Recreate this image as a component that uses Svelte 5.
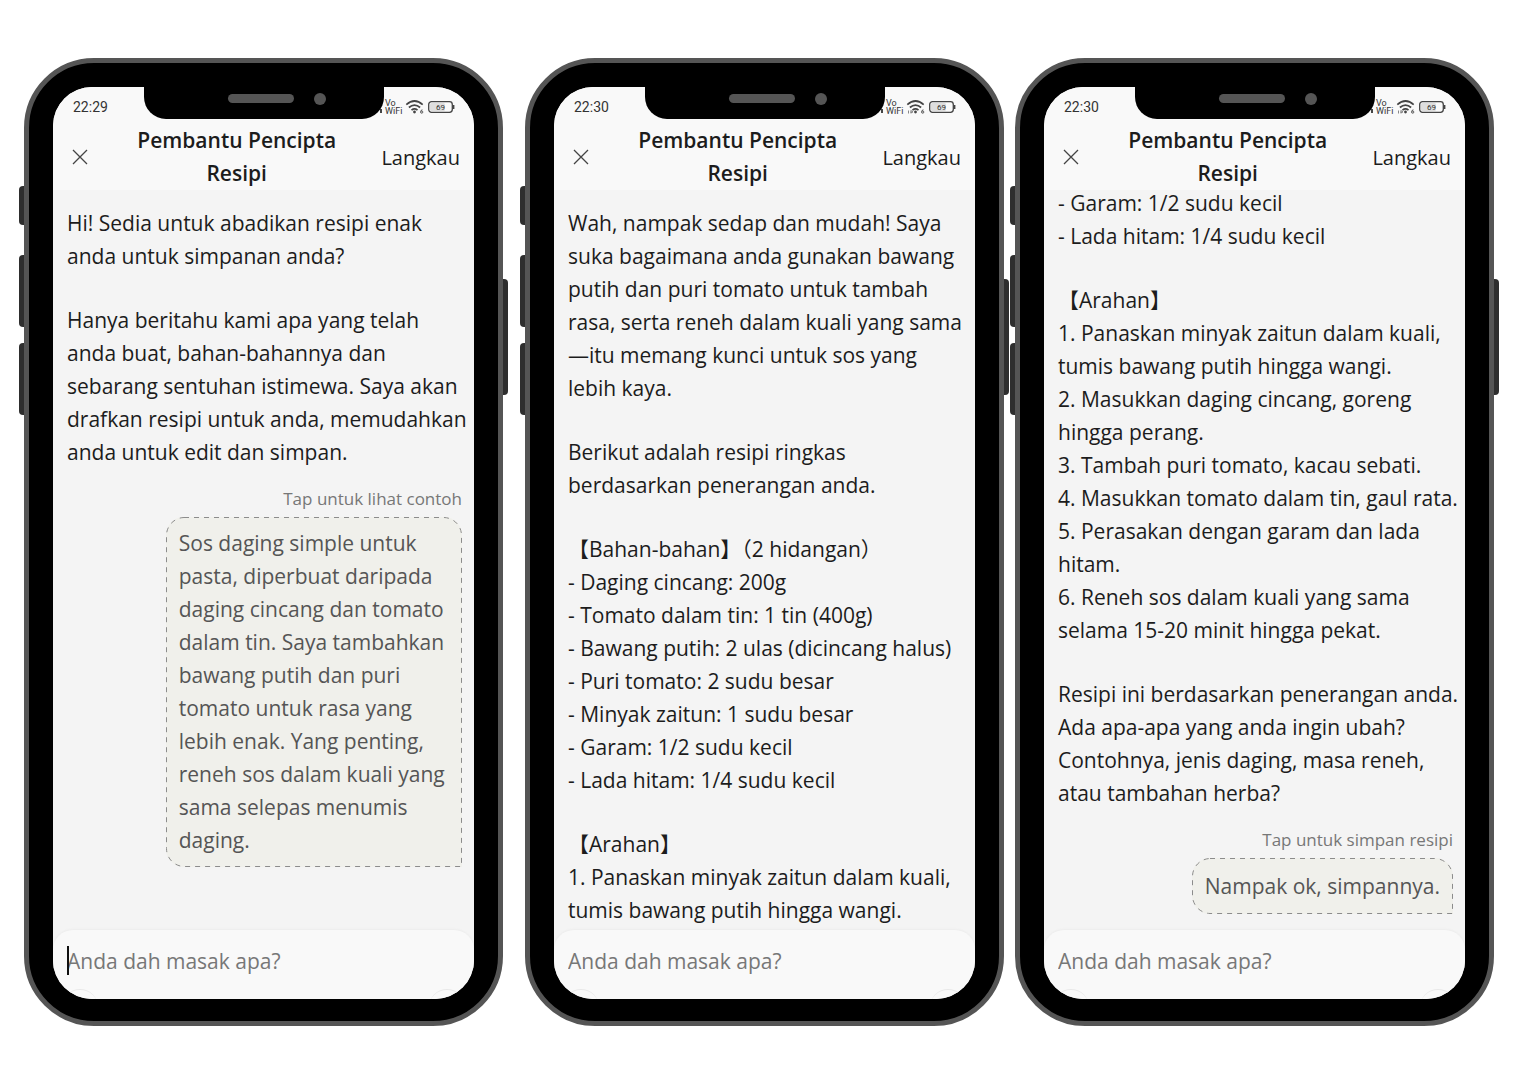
<script>
  const title = 'Pembantu Pencipta\nResipi';

  const ingredients = [
    '- Garam: 1/2 sudu kecil',
    '- Lada hitam: 1/4 sudu kecil'
  ];

  const phones = [
    {
      id: 'mula',
      time: '22:29',
      focused: true,
      traffic: false,
      paragraphs: [
        ['Hi! Sedia untuk abadikan resipi enak', 'anda untuk simpanan anda?'],
        [
          'Hanya beritahu kami apa yang telah',
          'anda buat, bahan-bahannya dan',
          'sebarang sentuhan istimewa. Saya akan',
          'drafkan resipi untuk anda, memudahkan',
          'anda untuk edit dan simpan.'
        ]
      ],
      hint: 'Tap untuk lihat contoh',
      reply:
        'Sos daging simple untuk pasta, diperbuat daripada daging cincang dan tomato dalam tin. Saya tambahkan bawang putih dan puri tomato untuk rasa yang lebih enak. Yang penting, reneh sos dalam kuali yang sama selepas menumis daging.'
    },
    {
      id: 'draf',
      time: '22:30',
      focused: false,
      traffic: true,
      paragraphs: [
        [
          'Wah, nampak sedap dan mudah! Saya',
          'suka bagaimana anda gunakan bawang',
          'putih dan puri tomato untuk tambah',
          'rasa, serta reneh dalam kuali yang sama',
          '—itu memang kunci untuk sos yang',
          'lebih kaya.'
        ],
        ['Berikut adalah resipi ringkas', 'berdasarkan penerangan anda.'],
        [
          '【Bahan-bahan】（2 hidangan）',
          '- Daging cincang: 200g',
          '- Tomato dalam tin: 1 tin (400g)',
          '- Bawang putih: 2 ulas (dicincang halus)',
          '- Puri tomato: 2 sudu besar',
          '- Minyak zaitun: 1 sudu besar',
          ...ingredients
        ],
        ['【Arahan】', '1. Panaskan minyak zaitun dalam kuali,', 'tumis bawang putih hingga wangi.']
      ]
    },
    {
      id: 'simpan',
      time: '22:30',
      focused: false,
      traffic: true,
      scrolled: true,
      paragraphs: [
        ingredients,
        [
          '【Arahan】',
          '1. Panaskan minyak zaitun dalam kuali,',
          'tumis bawang putih hingga wangi.',
          '2. Masukkan daging cincang, goreng',
          'hingga perang.',
          '3. Tambah puri tomato, kacau sebati.',
          '4. Masukkan tomato dalam tin, gaul rata.',
          '5. Perasakan dengan garam dan lada',
          'hitam.',
          '6. Reneh sos dalam kuali yang sama',
          'selama 15-20 minit hingga pekat.'
        ],
        [
          'Resipi ini berdasarkan penerangan anda.',
          'Ada apa-apa yang anda ingin ubah?',
          'Contohnya, jenis daging, masa reneh,',
          'atau tambahan herba?'
        ]
      ],
      hint: 'Tap untuk simpan resipi',
      reply: 'Nampak ok, simpannya.'
    }
  ];

  let sizes = $state(phones.map(() => ({ w: 0, h: 0 })));

  // Bubble outline: three rounded corners and a square one at the bottom right.
  function outline({ w, h }) {
    if (!w || !h) return '';
    const r = 18;
    const x = w - 0.5;
    const y = h - 0.5;
    return `M${r} .5H${x - r}A${r} ${r} 0 0 1 ${x} ${r}V${y}H${r}A${r} ${r} 0 0 1 .5 ${y - r}V${r}A${r} ${r} 0 0 1 ${r} .5Z`;
  }
</script>

<main>
  {#each phones as phone, i (phone.id)}
    <section class="phone" aria-label={`Skrin ${i + 1}`}>
      <span class="key mute"></span>
      <span class="key up"></span>
      <span class="key down"></span>
      <span class="key power"></span>

      <div class="screen">
        <div class="notch"><span class="speaker"></span><span class="camera"></span></div>

        <header>
          <div class="status">
            <span class="time">{phone.time}</span>
            <span class="signal"></span>
            <span class="vowifi"><span>Vo</span><span>WiFi</span></span>
            <svg class="wifi" viewBox="0 0 20 16" aria-hidden="true">
              <g fill="none" stroke="#444" stroke-width="1.7">
                <path d="M1.3 5.6Q9.5-1.6 17.7 5.6" />
                <path d="M3.9 8.5Q9.5 3.6 15.1 8.5" />
                <path d="M6.5 11.2Q9.5 8.7 12.5 11.2" />
              </g>
              <circle cx="9.5" cy="13" r="1.4" fill="#444" />
              <path d="M17.4 10.8Q15.6 11 15.6 13a1.1 1.1 0 1 0 .6-.9" fill="none" stroke="#555" />
              {#if phone.traffic}
                <path d="M2.5 14.5v-3M5 11.5v3M4.5 12h2v1.500h-2" fill="none" stroke="#888" />
              {/if}
            </svg>
            <svg class="battery" viewBox="0 0 28 12" aria-hidden="true">
              <rect x="2" y="2" width="15" height="8" rx="1.500" fill="#dedede" />
              <rect x=".7" y=".7" width="23.600" height="10.600" rx="2.800" fill="none" stroke="#444" stroke-width="1.300" />
              <path d="M25.500 4v4" stroke="#444" stroke-width="1.800" />
              <text x="12.500" y="9" text-anchor="middle">69</text>
            </svg>
          </div>
          <div class="bar">
            <button class="close" aria-label="Tutup">
              <svg viewBox="0 0 16 16" aria-hidden="true"><path d="M1 1l14 14M15 1L1 15" /></svg>
            </button>
            <h1>{title}</h1>
            <button class="skip">Langkau</button>
          </div>
        </header>

        <div class="chat" class:scrolled={phone.scrolled}>
          {#each phone.paragraphs as lines}
            <p>{lines.join('\n')}</p>
          {/each}
          {#if phone.reply}
            <div class="suggestion">
              <span class="hint">{phone.hint}</span>
              <button class="bubble" bind:offsetWidth={sizes[i].w} bind:offsetHeight={sizes[i].h}>
                <svg aria-hidden="true"><path d={outline(sizes[i])} /></svg>
                {phone.reply}
              </button>
            </div>
          {/if}
        </div>

        <footer class:focused={phone.focused}>
          <input type="text" aria-label="Mesej" placeholder="Anda dah masak apa?" />
          <div class="tools">
            <button aria-label="Tambah"></button>
            <button aria-label="Hantar"></button>
          </div>
        </footer>
      </div>
    </section>
  {/each}
</main>

<style>
  :global(body) {
    margin: 0;
    background: #fff;
  }

  main {
    display: flex;
    align-items: stretch;
    padding: 58px 36px 58px 24px;
    font-family: 'Open Sans', 'Noto Sans CJK SC', sans-serif;
    font-size: 21px;
    line-height: 33px;
    color: #1c1c1c;
  }

  button,
  input {
    margin: 0;
    padding: 0;
    border: 0;
    background: none;
    color: inherit;
    font: inherit;
  }

  .phone {
    position: relative;
    display: flex;
    flex: 1 1 0;
    min-width: 0;
    min-height: 968px;
    box-sizing: border-box;
    padding: 24px 24px 22px;
    border: 5px solid #555;
    border-radius: 70px;
    background: #000;
  }

  .phone:nth-child(2) {
    margin: 0 11px 0 22px;
  }

  .key {
    position: absolute;
    left: -10px;
    width: 5px;
    border-radius: 4px 0 0 4px;
    background: #2e2e2e;
  }

  .mute {
    top: 123px;
    height: 39px;
  }

  .up {
    top: 192px;
    height: 72px;
  }

  .down {
    top: 280px;
    height: 72px;
  }

  .power {
    top: 216px;
    right: -10px;
    left: auto;
    height: 116px;
    border-radius: 0 4px 4px 0;
  }

  .screen {
    position: relative;
    display: flex;
    flex: 1;
    flex-direction: column;
    min-width: 0;
    overflow: hidden;
    border-radius: 39px;
    background: #f4f4f4;
  }

  .notch {
    position: absolute;
    z-index: 2;
    top: 0;
    left: 50%;
    width: 240px;
    height: 32px;
    margin-left: -120px;
    border-radius: 0 0 22px 22px;
    background: #000;
  }

  .speaker,
  .camera {
    position: absolute;
    top: 7px;
    left: 84px;
    width: 66px;
    height: 9px;
    border-radius: 5px;
    background: #555;
  }

  .camera {
    top: 6px;
    left: 170px;
    width: 12px;
    height: 12px;
    border-radius: 50%;
  }

  header {
    height: 103px;
    background: #f9f9f9;
  }

  .status {
    display: flex;
    align-items: center;
    height: 37px;
    padding: 2px 18px 0 20px;
    box-sizing: border-box;
    color: #333;
  }

  .time {
    flex: 1;
    font: 14px/20px Roboto, sans-serif;
  }

  .signal {
    width: 2px;
    height: 4px;
    margin: 8px 3px 0 0;
    background: #444;
  }

  .vowifi {
    display: flex;
    flex-direction: column;
    width: 17px;
    margin-right: 3px;
    font: 9px/8px Roboto, sans-serif;
  }

  .wifi {
    width: 20px;
    height: 16px;
    margin-right: 3px;
  }

  .battery {
    width: 28px;
    height: 12px;
  }

  .battery text {
    fill: #333;
    font: 8px Roboto, sans-serif;
  }

  .bar {
    display: flex;
    align-items: center;
    padding: 0 14px;
  }

  .close {
    display: flex;
    justify-content: center;
    width: 25px;
  }

  .close svg {
    width: 16px;
    height: 16px;
    fill: none;
    stroke: #444;
    stroke-width: 1.3;
  }

  h1 {
    flex: 1;
    margin: 0;
    font-size: 21px;
    font-weight: 600;
    line-height: 33px;
    text-align: center;
    white-space: pre-line;
  }

  .skip {
    font-size: 20px;
  }

  .chat {
    flex: 1;
    padding: 17px 0 0 14px;
  }

  .scrolled {
    margin-top: -20px;
  }

  p {
    margin: 0;
    white-space: pre;
  }

  p + p {
    margin-top: 31px;
  }

  .suggestion {
    display: flex;
    flex-direction: column;
    align-items: flex-end;
    padding: 18px 12px 15px 0;
  }

  .hint {
    margin-bottom: 6px;
    color: #777;
    font-size: 17px;
    line-height: 24px;
  }

  .bubble {
    position: relative;
    max-width: 75%;
    min-height: 56px;
    padding: 10px 13px;
    border-radius: 18px 18px 0;
    background: #f0f0eb;
    color: #555;
    text-align: left;
  }

  .bubble svg {
    position: absolute;
    inset: 0;
    width: 100%;
    height: 100%;
    fill: none;
    stroke: #8c8c8c;
    stroke-dasharray: 5 5;
  }

  footer {
    position: relative;
    height: 69px;
    padding: 0 14px;
    border-radius: 20px 20px 0 0;
    background: #f9f9f9;
    box-shadow: 0 -1px 2px #ececec;
  }

  input {
    display: block;
    width: 100%;
    height: 59px;
    padding-top: 3px;
    box-sizing: border-box;
    outline: 0;
  }

  input::placeholder {
    color: #777;
    opacity: 1;
  }

  .focused::before {
    position: absolute;
    top: 16px;
    left: 14px;
    width: 2px;
    height: 29px;
    background: #111;
    content: '';
  }

  .tools {
    display: flex;
    justify-content: space-between;
    height: 10px;
    margin: 0 -5px;
  }

  .tools button {
    width: 36px;
    height: 36px;
    border-top: 1px solid #e9e9e9;
    border-radius: 50%;
  }
</style>
